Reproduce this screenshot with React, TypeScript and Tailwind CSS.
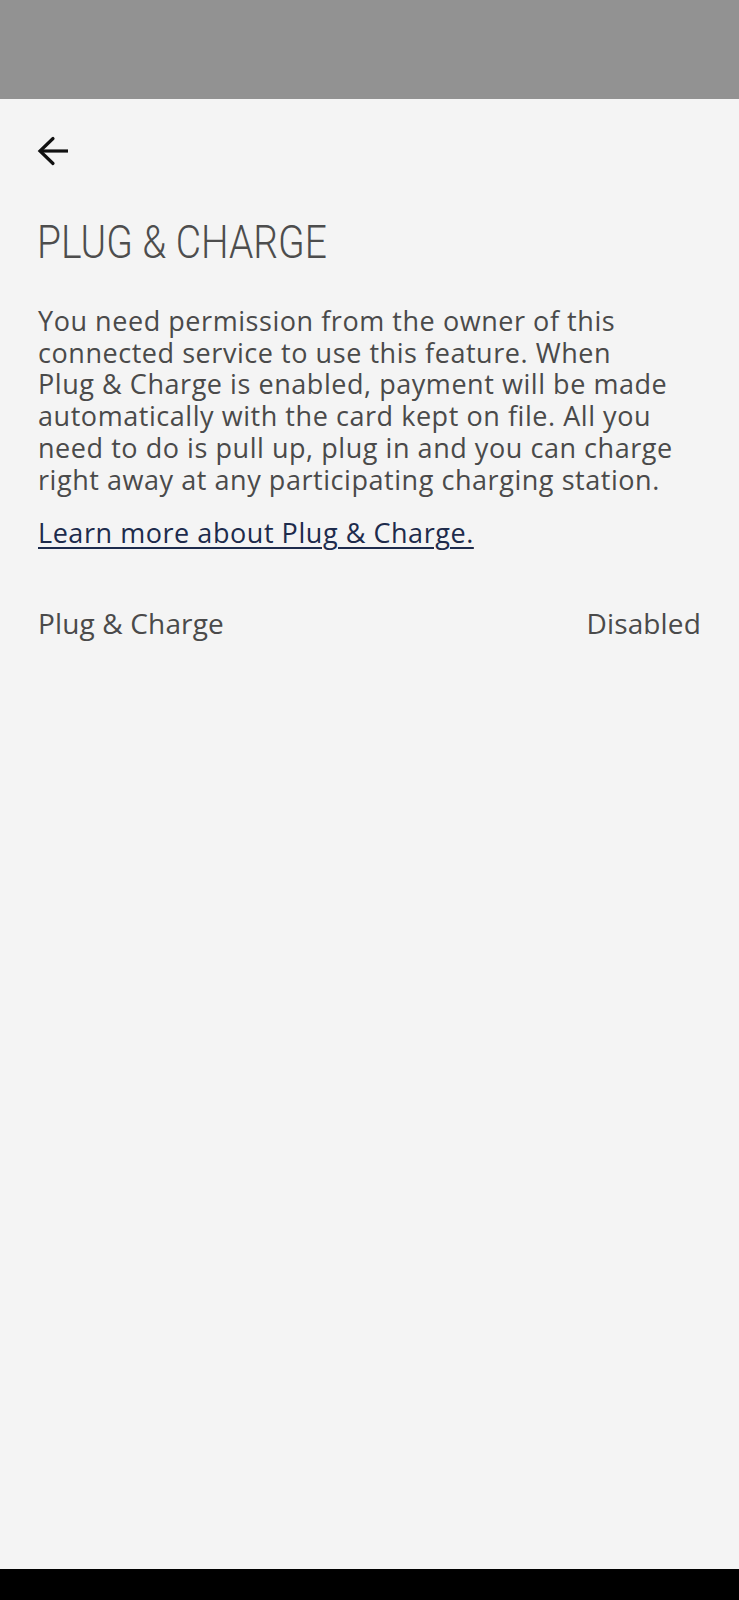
import React from "react";

function BackArrow() {
  return (
    <svg width="32" height="32" viewBox="0 0 32 32" fill="none" className="block">
      <path d="M31 15H3.5" stroke="#111" strokeWidth="3.2" />
      <path d="M16 2.5L3 15L16 27.5" stroke="#111" strokeWidth="3.2" strokeLinecap="round" strokeLinejoin="miter" />
    </svg>
  );
}

export default function App() {
  return (
    <div className="w-[739px] h-[1600px] flex flex-col bg-[#f4f4f4]" style={{ fontFamily: '"Open Sans", sans-serif' }}>
      {/* status bar */}
      <div className="h-[99px] bg-[#929292] shrink-0" />

      <main className="flex-1 flex flex-col px-[38px]">
        <button className="mt-[37px] w-8 h-8 -ml-[1px]" aria-label="Back">
          <BackArrow />
        </button>

        <h1
          className="mt-[51px] h-[46px] text-[46px] leading-[46px] font-light text-[#4d4d4d] whitespace-nowrap origin-left scale-x-[0.847] -ml-[1px]"
          style={{ fontFamily: "Roboto, sans-serif" }}
        >
          PLUG &amp; CHARGE
        </h1>

        <p className="mt-[40px] text-[27px] leading-[31.7px] tracking-[0.55px] text-[#4a4a4a] whitespace-nowrap">
          You need permission from the owner of this
          <br />
          connected service to use this feature. When
          <br />
          Plug &amp; Charge is enabled, payment will be made
          <br />
          automatically with the card kept on file. All you
          <br />
          need to do is pull up, plug in and you can charge
          <br />
          right away at any participating charging station.
        </p>

        <a href="#" className="mt-[22px] text-[27px] leading-[31.7px] tracking-[0.55px] text-[#1d2b4c] underline underline-offset-[4px] decoration-[2px] self-start">
          Learn more about Plug &amp; Charge.
        </a>

        <div className="mt-[56px] flex items-center justify-between text-[28px] leading-[36px] tracking-[0.15px] text-[#4a4a4a]">
          <span>Plug &amp; Charge</span>
          <span>Disabled</span>
        </div>
      </main>

      {/* navigation bar */}
      <div className="h-[31px] bg-black shrink-0" />
    </div>
  );
}
